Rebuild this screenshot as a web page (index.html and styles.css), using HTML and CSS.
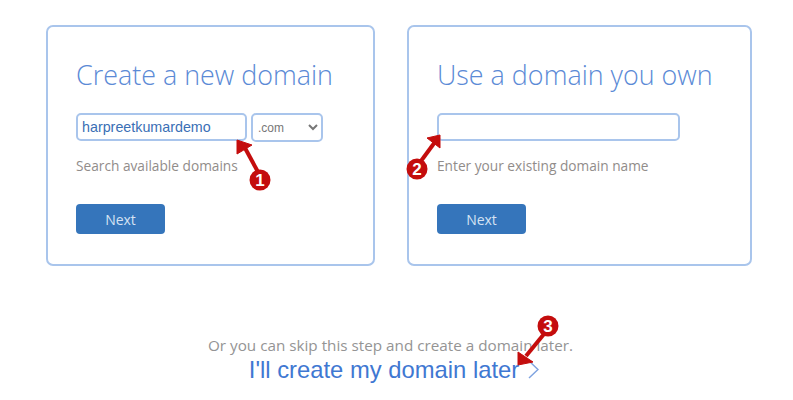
FILE: index.html
```html
<!DOCTYPE html>
<html lang="en">
<head>
    <meta charset="UTF-8">
    <meta name="viewport" content="width=device-width, initial-scale=1.0">
    <title>Choose a domain</title>
    <link rel="stylesheet" href="styles.css">
</head>
<body>
    <div class="page">
        <div class="cards">
            <div class="card card-new">
                <h2>Create a new domain</h2>
                <div class="field-row">
                    <input class="domain-input input-new" type="text" value="harpreetkumardemo">
                    <select class="tld-select">
                        <option>.com</option>
                    </select>
                </div>
                <p class="hint">Search available domains</p>
                <button class="next-btn">Next</button>
            </div>
            <div class="card card-own">
                <h2>Use a domain you own</h2>
                <div class="field-row">
                    <input class="domain-input input-own" type="text">
                </div>
                <p class="hint">Enter your existing domain name</p>
                <button class="next-btn">Next</button>
            </div>
        </div>

        <div class="skip">
            <p class="skip-text">Or you can skip this step and create a domain later.</p>
            <a class="skip-link" href="#">I'll create my domain later<svg class="chevron" width="11" height="19" viewBox="0 0 11 19"><path d="M1 1 L10 9.5 L1 18" fill="none" stroke="#7fa3e0" stroke-width="1.5"/></svg></a>
        </div>

        <!-- red callouts drawn over the screenshot -->
        <svg class="callouts" width="793" height="400" viewBox="0 0 793 400">
            <g fill="#c40d0d" stroke="#c40d0d">
                <path d="M258 172 L245 148" stroke-width="4" fill="none"/>
                <path d="M237 140 L252 145 L237 154 Z" stroke-width="1"/>
                <circle cx="260" cy="180" r="10.5" stroke="none"/>

                <path d="M421 161 L435 142" stroke-width="4" fill="none"/>
                <path d="M440 135 L440 148 L427 138 Z" stroke-width="1"/>
                <circle cx="417" cy="169" r="10.5" stroke="none"/>

                <path d="M544 334 L526 356" stroke-width="4" fill="none"/>
                <path d="M518 365 L518 352 L533 362 Z" stroke-width="1"/>
                <circle cx="548" cy="326" r="10.5" stroke="none"/>
            </g>
            <g class="callout-num">
                <text x="260" y="186">1</text>
                <text x="417" y="175">2</text>
                <text x="548" y="332">3</text>
            </g>
        </svg>
    </div>
</body>
</html>
```

FILE: styles.css
```css
body {
    margin: 0;
    background-color: #ffffff;
    font-family: "Open Sans", sans-serif;
}
.page {
    position: relative;
    width: 793px;
    height: 400px;
    overflow: hidden;
    padding-top: 25px;
    box-sizing: border-box;
}
.cards {
    display: flex;
    gap: 32px;
    padding-left: 46px;
}
.card {
    box-sizing: border-box;
    height: 241px;
    padding: 29px 28px 0;
    border: 2px solid #a9c5ec;
    border-radius: 7px;
}
.card-new {
    width: 329px;
}
.card-own {
    width: 345px;
}
h2 {
    margin: 0 0 19px;
    font-size: 26.9px;
    line-height: 38px;
    font-weight: 300;
    color: #5b8ad6;
    white-space: nowrap;
}
.field-row {
    display: flex;
    gap: 4px;
    height: 28px;
}
.domain-input {
    box-sizing: border-box;
    height: 28px;
    padding: 0 4px;
    border: 2px solid #a9c5ec;
    border-radius: 5px;
    outline: none;
    font-family: "Liberation Sans", Arial, sans-serif;
    font-size: 14.3px;
    color: #3a6fb5;
}
.input-new {
    width: 171px;
}
.input-own {
    width: 243px;
}
.tld-select {
    box-sizing: border-box;
    width: 72px;
    height: 29px;
    padding-left: 1px;
    border: 2px solid #a9c5ec;
    border-radius: 5px;
    background-color: #ffffff;
    font-family: "Liberation Sans", Arial, sans-serif;
    font-size: 12px;
    color: #777777;
}
.hint {
    margin: 15px 0 0;
    font-size: 13.7px;
    line-height: 20px;
    color: #918c8a;
}
.next-btn {
    display: block;
    width: 89px;
    height: 30px;
    margin-top: 28px;
    border: none;
    border-radius: 4px;
    background-color: #3575bb;
    font-family: "Open Sans", sans-serif;
    font-size: 14px;
    color: #d5e3f3;
}
.skip {
    margin-top: 69px;
    text-align: center;
}
.skip-text {
    margin: 0;
    padding-right: 12px;
    font-size: 15.25px;
    line-height: 20px;
    color: #949494;
}
.skip-link {
    display: inline-block;
    margin-right: 5px;
    font-family: "Liberation Sans", Arial, sans-serif;
    font-size: 23.8px;
    line-height: 30px;
    color: #3f78d2;
    text-decoration: none;
}
.chevron {
    margin-left: 9px;
    vertical-align: -1px;
}
.callouts {
    position: absolute;
    left: 0;
    top: 0;
}
.callout-num text {
    font-family: "Liberation Sans", Arial, sans-serif;
    font-size: 17px;
    font-weight: bold;
    fill: #ffffff;
    text-anchor: middle;
}
```
